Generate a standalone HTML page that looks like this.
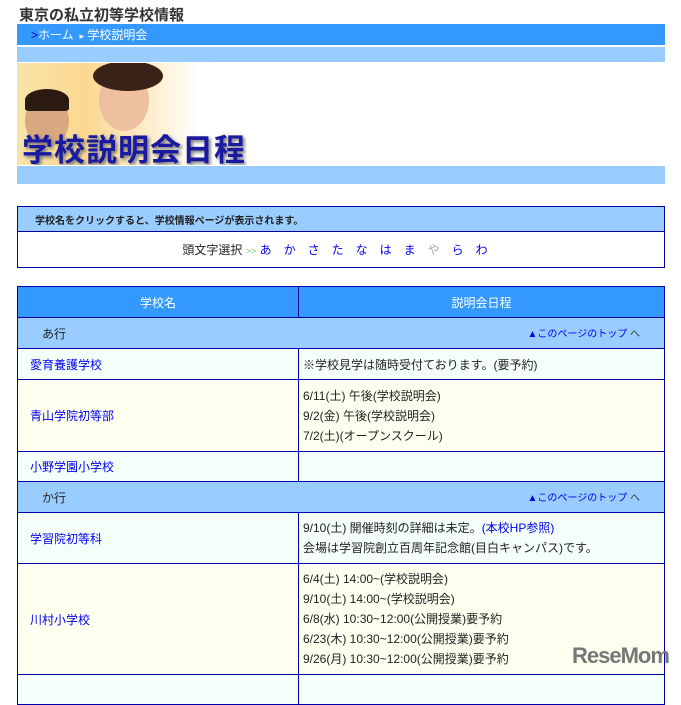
<!DOCTYPE html>
<html><head><meta charset="utf-8"><style>
*{margin:0;padding:0;box-sizing:border-box}
body{width:681px;height:681px;overflow:hidden;background:#fff;font-family:"Liberation Sans","Noto Sans CJK JP",sans-serif;font-size:12px;color:#222;position:relative}
.abs{position:absolute}
a{color:#0000ee;text-decoration:none}
.t{left:19px;top:4px;font-size:15px;font-weight:bold;color:#333}
.bc{left:17px;top:24px;width:648px;height:21px;background:#3399ff;color:#fff;font-size:12px;line-height:22px;padding-left:14px}
.lb{left:17px;width:648px;background:#99ccff}
.img{left:17px;top:63px;width:230px;height:102px;background:linear-gradient(90deg,#f8e4a8 0%,#fcd890 30%,#fff 80%);overflow:hidden}
.img .h{position:absolute;left:5px;top:62px;font-size:31px;color:#1a1aa0;font-weight:bold;letter-spacing:1px;text-shadow:2px 2px 3px #777}
table{border-collapse:collapse;position:absolute;left:17px;width:648px}
td{border:1px solid #0000aa;font-size:12px;padding:0 12px}
td.s{padding-left:4px}
</style></head><body>
<div class="abs t">東京の私立初等学校情報</div>
<div class="abs bc"><span style="color:#0000cc">&gt;</span>ホーム <span style="font-size:9px">&nbsp;▸</span> 学校説明会</div>
<div class="abs lb" style="top:47px;height:15px"></div>
<div class="abs img">
<div style="position:absolute;left:8px;top:32px;width:44px;height:52px;border-radius:50%;background:#d8a880"></div>
<div style="position:absolute;left:8px;top:26px;width:44px;height:22px;border-radius:50% 50% 10% 10%;background:#2a1a12"></div>
<div style="position:absolute;left:82px;top:6px;width:50px;height:62px;border-radius:50%;background:#eec0a0"></div>
<div style="position:absolute;left:76px;top:-2px;width:70px;height:30px;border-radius:50%;background:#3a2218"></div>
<div class="h">学校説明会日程</div></div>
<div class="abs lb" style="top:166px;height:18px"></div>
<table style="top:206px">
<tr><td style="background:#99ccff;height:25px;font-size:10px;font-weight:bold;padding-left:17px">学校名をクリックすると、学校情報ページが表示されます。</td></tr>
<tr><td style="height:36px;text-align:center;font-size:12px">頭文字選択 <span style="color:#6c6;font-size:9px">&gt;&gt;</span> <span style="color:#0000ee;letter-spacing:12px">あかさたなはま<span style="color:#aaa">や</span>らわ</span></td></tr>
</table>
<table style="top:286px">
<tr style="background:#3399ff;color:#fff;text-align:center;height:31px"><td style="width:281px">学校名</td><td>説明会日程</td></tr>
<tr style="background:#99ccff;height:31px"><td colspan="2" style="padding-left:24px">あ行<span style="float:right;font-size:10px;color:#0000ee;margin-right:12px">▲このページのトップ <span style="color:#333">へ</span></span></td></tr>
<tr style="background:#f4fffa;height:31px"><td><a>愛育養護学校</a></td><td class="s">※学校見学は随時受付ております。(要予約)</td></tr>
<tr style="background:#fffff0;height:72px"><td><a>青山学院初等部</a></td><td class="s" style="line-height:20px">6/11(土) 午後(学校説明会)<br>9/2(金) 午後(学校説明会)<br>7/2(土)(オープンスクール)</td></tr>
<tr style="background:#f4fffa;height:30px"><td><a>小野学園小学校</a></td><td></td></tr>
<tr style="background:#99ccff;height:31px"><td colspan="2" style="padding-left:24px">か行<span style="float:right;font-size:10px;color:#0000ee;margin-right:12px">▲このページのトップ <span style="color:#333">へ</span></span></td></tr>
<tr style="background:#f4fffa;height:51px"><td><a>学習院初等科</a></td><td class="s" style="line-height:20px">9/10(土) 開催時刻の詳細は未定。<a>(本校HP参照)</a><br>会場は学習院創立百周年記念館(目白キャンパス)です。</td></tr>
<tr style="background:#fffff0;height:111px"><td><a>川村小学校</a></td><td class="s" style="line-height:20px">6/4(土) 14:00~(学校説明会)<br>9/10(土) 14:00~(学校説明会)<br>6/8(水) 10:30~12:00(公開授業)要予約<br>6/23(木) 10:30~12:00(公開授業)要予約<br>9/26(月) 10:30~12:00(公開授業)要予約</td></tr>
<tr style="background:#f4fffa;height:30px"><td></td><td></td></tr>
</table>
<div class="abs" style="left:572px;top:643px;font-size:22px;font-weight:bold;color:#777;letter-spacing:-1px">ReseMom</div>
</body></html>
